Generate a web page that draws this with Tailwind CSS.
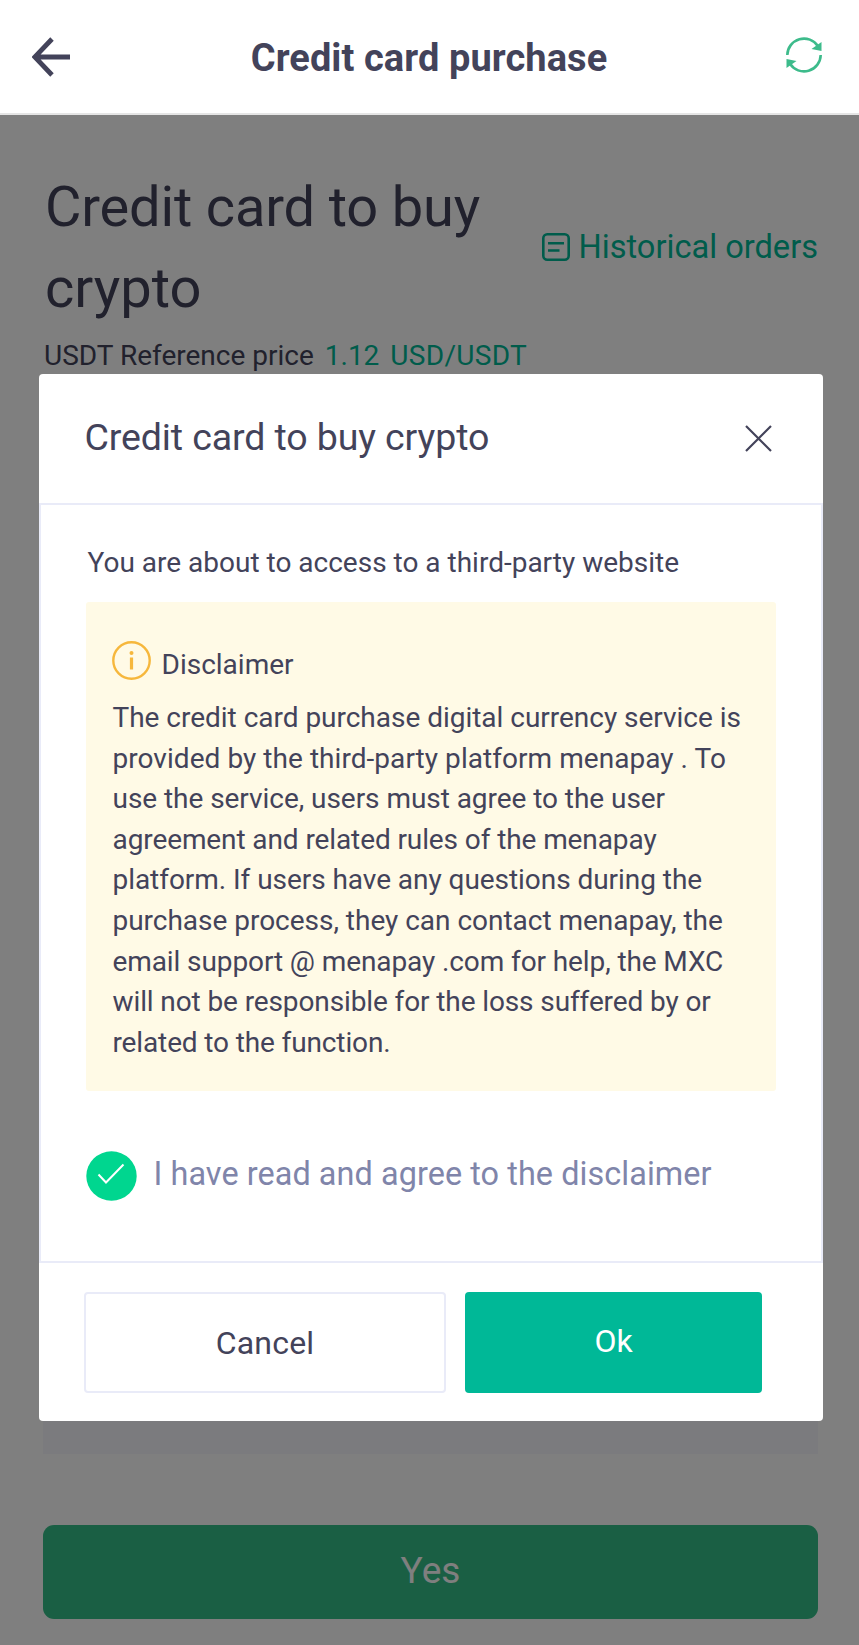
<!DOCTYPE html>
<html lang="en">
<head>
    <meta charset="UTF-8">
    <meta name="viewport" content="width=device-width, initial-scale=1.0">
    <title>Credit card purchase</title>
    <script src="https://cdn.jsdelivr.net/npm/@tailwindcss/browser@4"></script>
</head>
<body class="bg-white font-['Roboto',sans-serif] text-[#43435a]">
    <div class="relative flex flex-col h-[1645px] overflow-hidden">
        <!-- Header -->
        <header class="flex items-center justify-between h-[115px] pl-8 pr-9 border-b-2 border-[#e5e5e5]">
            <button type="button" aria-label="Back">
                <svg class="w-[39px] h-10" viewBox="0 0 39 40" fill="none" stroke="#43435a" stroke-width="4.800">
                    <path d="M38 20H4M20 2L2.800 20L20 38" />
                </svg>
            </button>
            <h1 class="text-[38px] leading-[48px] font-bold tracking-[0.085px] pt-[3px] pl-px">Credit card purchase</h1>
            <button type="button" aria-label="Refresh">
                <svg class="w-9 h-9 -mt-1 mr-px" viewBox="0 0 36 36" fill="none" stroke="#3dbb8b" stroke-width="2.600">
                    <path d="M1.300 18A16.700 16.700 0 0 1 32 9.200M34.700 18A16.700 16.700 0 0 1 4 26.800" />
                    <path d="M35.500 5V14L25.500 12ZM0.500 31V22L10.500 24Z" fill="#3dbb8b" stroke="none" />
                </svg>
            </button>
        </header>

        <!-- Page content -->
        <main class="flex flex-col flex-1 pt-[52px] pl-[43px] pr-[41px] pb-[26px]">
            <div class="flex items-center justify-between">
                <h2 class="w-[460px] pl-0.5 text-[56px] leading-[81px]"><span class="tracking-[-0.170px]">Credit card to buy</span> crypto</h2>
                <a href="#" class="flex items-center gap-[9px] -mt-0.5 text-[32.600px] leading-[48px] text-[#00b897] whitespace-nowrap">
                    <svg class="w-7 h-7" viewBox="0 0 28 28" fill="none" stroke="currentColor" stroke-width="2.600">
                        <rect x="1.300" y="1.300" width="25.400" height="25.400" rx="4" />
                        <path d="M6 10.200H22M6 17.500H17.500" />
                    </svg>
                    Historical orders
                </a>
            </div>
            <p class="flex gap-[11px] mt-[7px] pl-px text-[28px] leading-10">
                <span>USDT Reference price</span>
                <span class="text-[#00b897]">1.12</span>
                <span class="text-[#00b897] tracking-[0.300px]">USD/USDT</span>
            </p>
            <div class="mt-auto h-16 bg-[#f7f7fc]"></div>
            <button type="button" class="mt-[71px] h-[94px] pb-0.5 rounded-[11px] bg-[#34bf88] text-[37px] text-white">Yes</button>
        </main>

        <!-- Overlay -->
        <div class="absolute inset-x-0 top-[115px] bottom-0 bg-black/50"></div>

        <!-- Modal -->
        <div class="absolute left-[38.500px] top-[374px] flex flex-col w-[784.500px] h-[1047px] rounded-[4px] bg-white overflow-hidden">
            <div class="flex items-center justify-between h-[129px] pl-[46px] pr-[51px]">
                <h3 class="-mt-[3px] text-[37.500px] leading-[48px] tracking-[-0.110px]">Credit card to buy crypto</h3>
                <button type="button" aria-label="Close">
                    <svg class="w-[27px] h-[27px]" viewBox="0 0 27 27" fill="none" stroke="#43435a" stroke-width="2.200">
                        <path d="M1 1L26 26M26 1L1 26" />
                    </svg>
                </button>
            </div>

            <div class="h-[760px] pl-[45px] pr-[45px] border-2 border-[#e9ebf8]">
                <p class="pt-[38px] pl-0.5 text-[28px] leading-10">You are about to access to a third-party website</p>

                <div class="h-[489px] mt-[19px] pt-[39px] pl-[26px] rounded-[3px] bg-[#fffae6]">
                    <div class="flex items-start gap-[11px]">
                        <svg class="w-[39px] h-[39px]" viewBox="0 0 39 39" fill="none" stroke="#f6b73c" stroke-width="2.400">
                            <circle cx="19.500" cy="19.500" r="18.200" />
                            <path d="M19.500 16.500V28.500" stroke-width="3.200" />
                            <circle cx="19.500" cy="12" r="2" fill="#f6b73c" stroke="none" />
                        </svg>
                        <h4 class="pt-[5px] text-[28px] leading-[38px]">Disclaimer</h4>
                    </div>
                    <p class="mt-3.5 w-[640px] pl-px text-[28px] leading-[40.600px] tracking-[-0.050px]">
                        <span class="tracking-[-0.020px]">The credit card purchase digital currency service is</span><br>
                        <span class="tracking-[0.050px]">provided by the third-party platform menapay . To</span><br>
                        use the service, users must agree to the user<br>
                        <span class="tracking-[-0.100px]">agreement and related rules of the menapay</span><br>
                        platform. If users have any questions during the<br>
                        <span class="tracking-[-0.020px]">purchase process, they can contact menapay, the</span><br>
                        <span class="tracking-[-0.100px]">email support @ menapay .com for help, the MXC</span><br>
                        <span class="tracking-[-0.110px]">will not be responsible for the loss suffered by or</span><br>
                        <span class="tracking-[-0.130px]">related to the function.</span>
                    </p>
                </div>

                <label class="flex items-center gap-[17px] mt-[60px]">
                    <svg class="w-[51px] h-[50px]" viewBox="0 0 51 50">
                        <ellipse cx="25.500" cy="25" rx="25.200" ry="24.700" fill="#00d68f" />
                        <path d="M12.500 23.500L20 31.500L37.500 13.500" fill="none" stroke="#fff" stroke-width="2" />
                    </svg>
                    <span class="-mt-1 text-[32.400px] leading-[48px] tracking-[0.070px] text-[#8085aa]">I have read and agree to the disclaimer</span>
                </label>
            </div>

            <div class="flex gap-[19px] pt-[29px] pl-[45.500px]">
                <button type="button" class="w-[362px] h-[101px] pt-px rounded-[4px] border-2 border-[#e9ebf8] text-[32px] tracking-[0.200px]">Cancel</button>
                <button type="button" class="w-[297px] h-[101px] pb-1 rounded-[4px] bg-[#00b897] text-[32px] text-white">Ok</button>
            </div>
        </div>
    </div>
</body>
</html>
